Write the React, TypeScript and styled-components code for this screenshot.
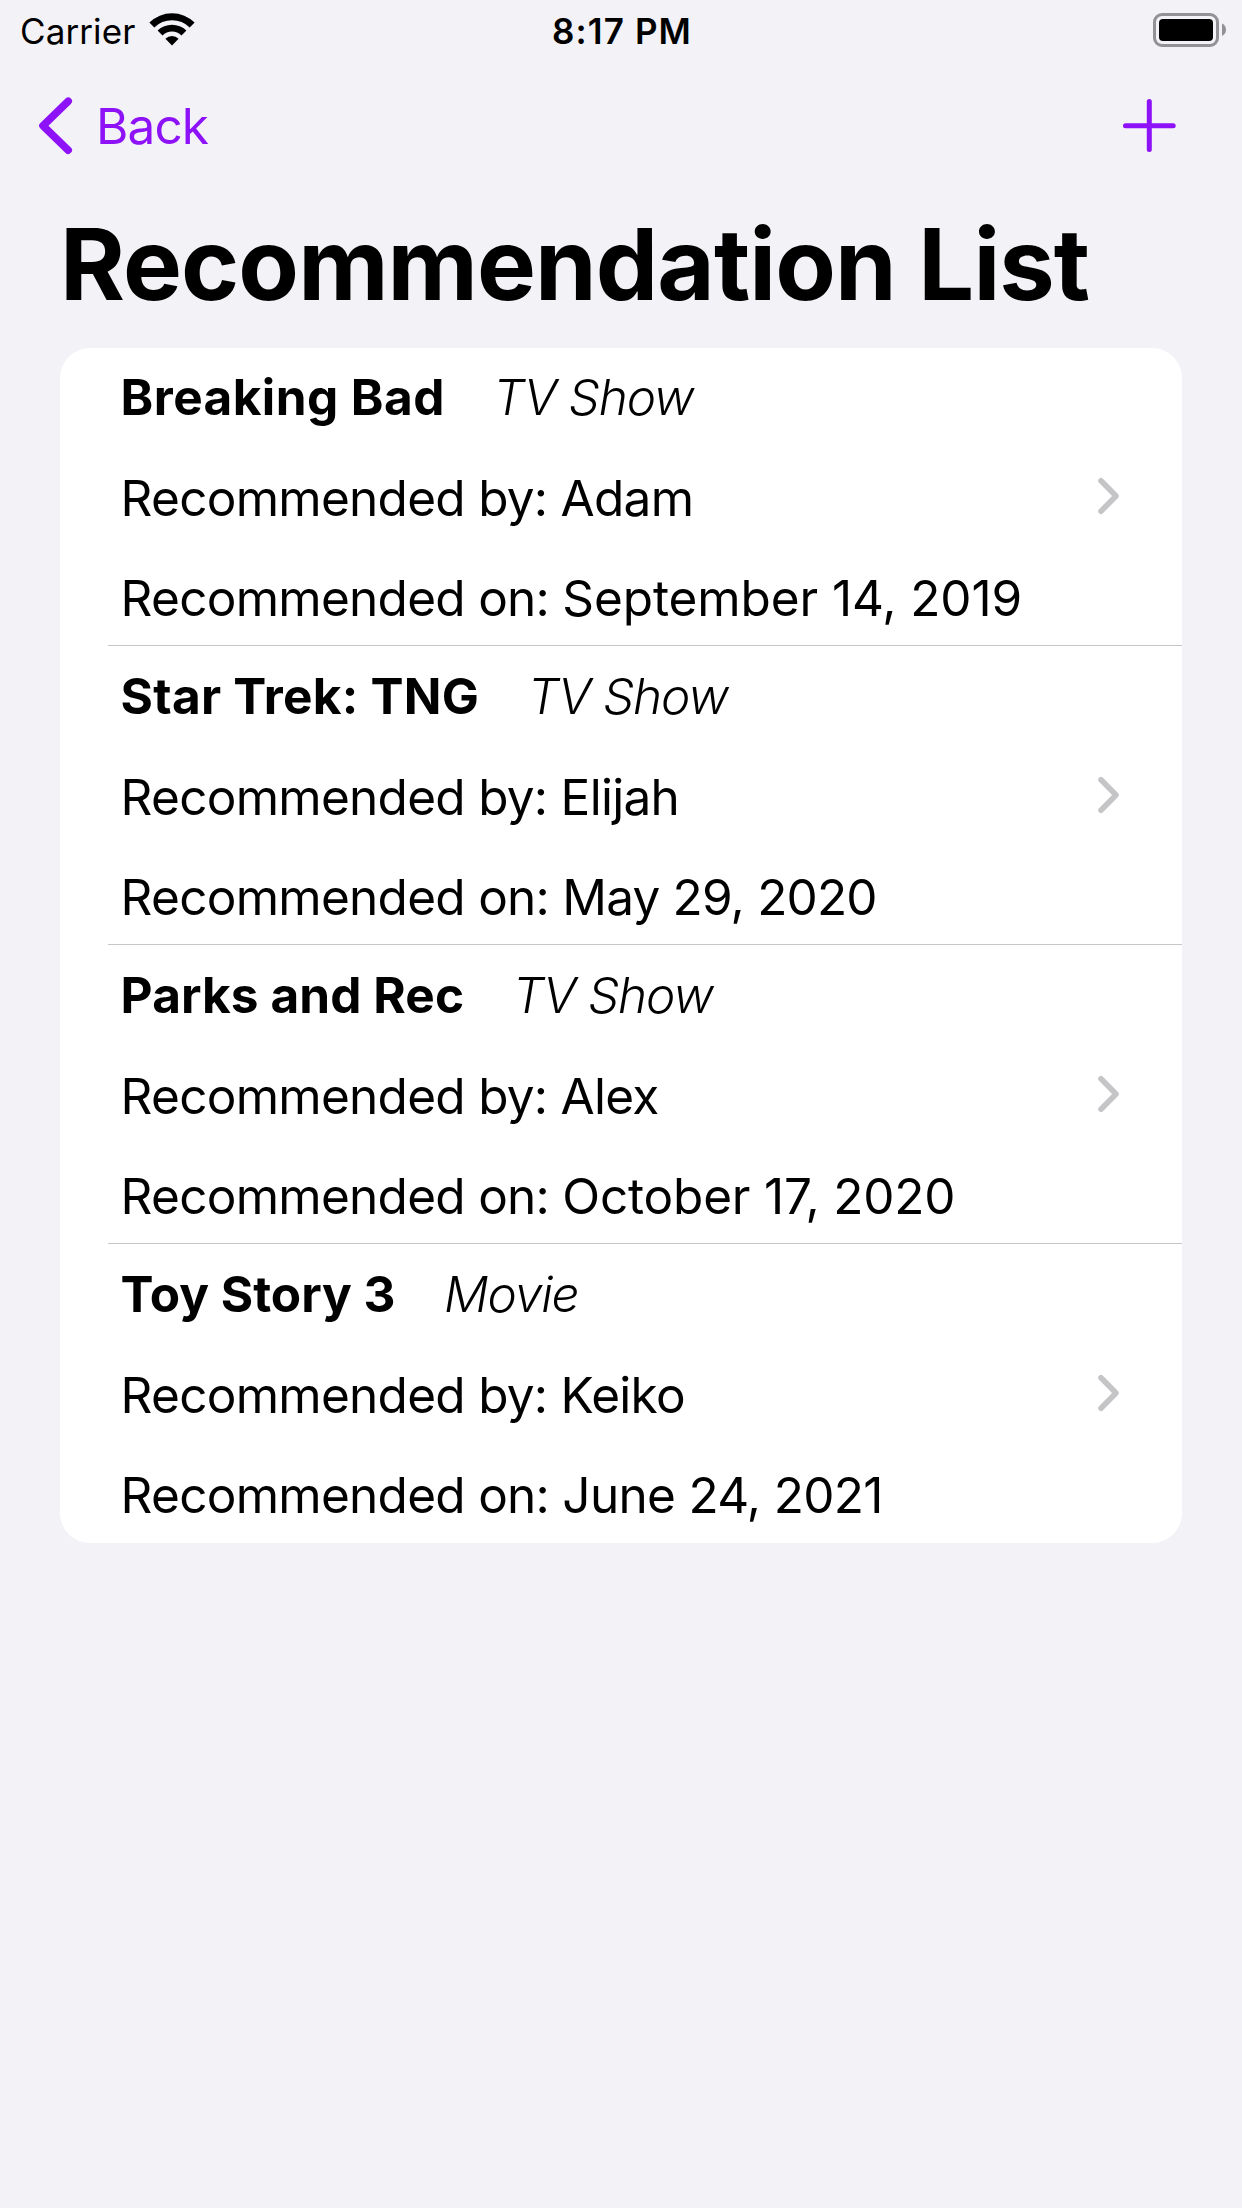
import React from "react";
import styled, { createGlobalStyle } from "styled-components";

const GlobalStyle = createGlobalStyle`
  * { box-sizing: border-box; }
  body {
    margin: 0;
    background: #f2f2f7;
    color: #000;
    font-family: Inter, "Liberation Sans", sans-serif;
  }
`;

const Screen = styled.main`
  width: 1242px;
  height: 2208px;
  background: #f2f2f7;
  display: flex;
  flex-direction: column;
  overflow: hidden;
`;

const StatusBar = styled.header`
  height: 60px;
  display: grid;
  grid-template-columns: 1fr auto 1fr;
  align-items: start;
  padding: 10px 15px 0;
`;

const CarrierGroup = styled.div`
  display: flex;
  align-items: flex-start;
  padding-left: 5px;
`;

const Carrier = styled.span`
  width: 129px;
  font-size: 35px;
  line-height: 42px;
  letter-spacing: 0.1px;
  white-space: nowrap;
`;

const Clock = styled.span`
  padding-left: 2px;
  font-size: 35px;
  line-height: 42px;
  font-weight: 600;
  letter-spacing: 1.1px;
  white-space: nowrap;
`;

const StatusIcon = styled.svg`
  display: block;
  margin-top: 3px;
`;

const BatteryIcon = styled(StatusIcon)`
  justify-self: end;
`;

const NavBar = styled.nav`
  height: 132px;
  display: flex;
  justify-content: space-between;
  align-items: flex-start;
  padding: 36px 65px 0 38px;
  color: #8e12f8;
`;

const NavButton = styled.button`
  display: flex;
  align-items: flex-start;
  padding: 0;
  border: 0;
  background: none;
  color: inherit;
  font: inherit;
`;

const BackLabel = styled.span`
  margin-left: 22px;
  font-size: 49.5px;
  line-height: 60px;
  letter-spacing: -0.9px;
`;

const Title = styled.h1`
  margin: 12px 0 0 60px;
  height: 144px;
  font-size: 99px;
  line-height: 120px;
  font-weight: 700;
  letter-spacing: -0.9px;
  white-space: nowrap;
`;

const Card = styled.ul`
  list-style: none;
  margin: 0 60px;
  padding: 0 0 1px 48px;
  background: #fff;
  border-radius: 30px;
  overflow: hidden;
`;

const Row = styled.li`
  display: flex;
  justify-content: space-between;
  align-items: center;
  height: 299px;
  padding: 20px 62px 0 12.6px;
  border-top: 1px solid #c6c6c8;

  &:first-child {
    height: 297px;
    padding-top: 19px;
    border-top: 0;
  }
`;

const RowText = styled.div`
  align-self: flex-start;
  font-size: 49.5px;
  line-height: 60px;
  letter-spacing: -0.72px;
  white-space: nowrap;
`;

const Heading = styled.div`
  display: flex;
  margin-bottom: 41px;
`;

const Name = styled.span<{ $tracking: number }>`
  font-weight: 700;
  letter-spacing: ${(p) => p.$tracking}px;
`;

const Kind = styled.span`
  margin-left: 48.500px;
  font-weight: 300;
  font-style: italic;
  letter-spacing: -1.15px;
`;

const Detail = styled.div`
  & + & {
    margin-top: 40px;
  }
`;

const DateText = styled.span<{ $tracking: number }>`
  letter-spacing: ${(p) => p.$tracking}px;
`;

const Disclosure = styled.svg`
  flex: none;
  margin-bottom: 20px;
`;

const items = [
  { name: "Breaking Bad", kind: "TV Show", by: "Adam", on: "September 14, 2019", nameTracking: 0.43, dateTracking: -0.1 },
  { name: "Star Trek: TNG", kind: "TV Show", by: "Elijah", on: "May 29, 2020", nameTracking: 0.26, dateTracking: -0.82 },
  { name: "Parks and Rec", kind: "TV Show", by: "Alex", on: "October 17, 2020", nameTracking: 0.1, dateTracking: -0.2 },
  { name: "Toy Story 3", kind: "Movie", by: "Keiko", on: "June 24, 2021", nameTracking: 0, dateTracking: -0.68 },
];

function Wifi() {
  return (
    <StatusIcon width="46" height="33" viewBox="0 0 46 33">
      <path d="M0.4 9.6a32 32 0 0 1 45.2 0l-4.9 4.9a25 25 0 0 0-35.4 0z" />
      <path d="M8.6 17.6a20.4 20.4 0 0 1 28.8 0l-4.9 4.9a13.4 13.4 0 0 0-19 0z" />
      <path d="M16.4 25.7a9.4 9.4 0 0 1 13.2 0L23 32.6z" />
    </StatusIcon>
  );
}

function Battery() {
  return (
    <BatteryIcon width="74" height="34" viewBox="0 0 74 34">
      <rect x="1.5" y="1.5" width="63" height="31" rx="7.5" fill="none" stroke="#929195" strokeWidth="3" />
      <rect x="6" y="6" width="54" height="22" rx="4" />
      <path d="M69 10.5c2.600 1.200 4 3.500 4 6.200s-1.400 5-4 6.200z" fill="#929195" />
    </BatteryIcon>
  );
}

export default function App() {
  return (
    <>
      <GlobalStyle />
      <Screen>
        <StatusBar>
          <CarrierGroup>
            <Carrier>Carrier</Carrier>
            <Wifi />
          </CarrierGroup>
          <Clock>8:17 PM</Clock>
          <Battery />
        </StatusBar>
        <NavBar>
          <NavButton>
            <svg width="36" height="60" viewBox="0 0 36 60" fill="none" stroke="currentColor" strokeWidth="7.600" strokeLinecap="round" strokeLinejoin="round">
              <path d="M30.200 5.200L5 29.700L30.200 54.200" />
            </svg>
            <BackLabel>Back</BackLabel>
          </NavButton>
          <NavButton aria-label="Add">
            <svg width="54" height="60" viewBox="0 0 54 60" fill="none" stroke="currentColor" strokeWidth="5" strokeLinecap="round">
              <path d="M26.300 5.500V53.500M2.500 29.700H50.200" />
            </svg>
          </NavButton>
        </NavBar>
        <Title>Recommendation List</Title>
        <Card>
          {items.map((item) => (
            <Row key={item.name}>
              <RowText>
                <Heading>
                  <Name $tracking={item.nameTracking}>{item.name}</Name>
                  <Kind>{item.kind}</Kind>
                </Heading>
                <Detail>Recommended by: {item.by}</Detail>
                <Detail>
                  Recommended on: <DateText $tracking={item.dateTracking}>{item.on}</DateText>
                </Detail>
              </RowText>
              <Disclosure width="22" height="38" viewBox="0 0 22 38" fill="none" stroke="#c5c5c7" strokeWidth="5.600" strokeLinecap="round" strokeLinejoin="round">
                <path d="M3 3.800L18 19L3 34.200" />
              </Disclosure>
            </Row>
          ))}
        </Card>
      </Screen>
    </>
  );
}
